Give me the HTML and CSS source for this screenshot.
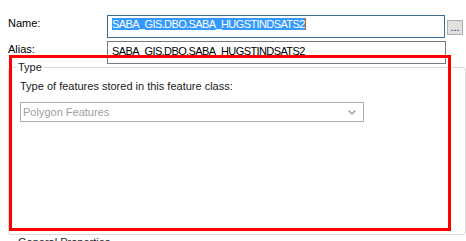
FILE: index.html
```html
<!doctype html>
<html lang="en">
  <head>
    <meta charset="UTF-8" />
    <meta name="viewport" content="width=device-width, initial-scale=1.0" />
    <title>Feature Class Properties</title>
    <link rel="stylesheet" href="styles.css">
  </head>
  <body>
    <div class="dialog">
      <div class="field-row">
        <label class="field-label">Name:</label>
        <div class="textbox textbox-focused">
          <span class="selected">SABA_GIS.DBO.SABA_HUGSTINDSATS2</span>
        </div>
        <button class="browse-button">...</button>
      </div>

      <div class="field-row">
        <label class="field-label">Alias:</label>
        <div class="textbox textbox-alias">SABA_GIS.DBO.SABA_HUGSTINDSATS2</div>
      </div>

      <fieldset class="group group-type">
        <legend>Type</legend>
        <div class="group-body">
          <p class="group-text">Type of features stored in this feature class:</p>
          <div class="combo combo-disabled">
            <span>Polygon Features</span>
            <svg class="combo-arrow" viewBox="0 0 8 5" width="8" height="5">
              <path d="M0.6 0.6 L4 4 L7.4 0.6" fill="none" stroke="currentColor" stroke-width="1.4" />
            </svg>
          </div>
        </div>
      </fieldset>

      <fieldset class="group">
        <legend>General Properties</legend>
        <div class="group-body"></div>
      </fieldset>

      <!-- annotation drawn over the Type group -->
      <div class="highlight-frame"></div>
    </div>
  </body>
</html>
```

FILE: styles.css
```css
* {
  margin: 0;
  padding: 0;
  box-sizing: border-box;
}

html,
body {
  overflow: hidden;
}

body {
  font-family: 'Liberation Sans', Arial, sans-serif;
  font-size: 11px;
  line-height: 13px;
  color: #000;
  background: #fff;
}

.dialog {
  position: relative;
  padding: 15px 0 0 8px;
}

.field-row {
  display: flex;
  align-items: flex-start;
  margin-bottom: 3px;
}

.field-label {
  width: 99px;
  padding-top: 2px;
}

.textbox {
  width: 338px;
  height: 23px;
  padding: 2px 4px 0;
  border: 1px solid #7a7a7a;
  background: #fff;
  letter-spacing: -0.6px;
  white-space: nowrap;
}

.textbox-focused {
  border-color: #3c6b90;
}

.textbox-alias {
  width: 339px;
  padding-top: 3px;
}

.selected {
  background: #3399ff;
  color: #fff;
  border-right: 1px solid #cc6600;
}

.browse-button {
  width: 16px;
  height: 15px;
  margin: 5px 0 0 2px;
  padding-top: 0;
  border: 1px solid #adadad;
  background: #e1e1e1;
  font: inherit;
  line-height: 13px;
  color: #1c1c5c;
  text-align: center;
}

.group {
  margin-top: -6px;
  padding: 0 0 0 7px;
  border: 1px solid #dcdcdc;
  border-radius: 3px;
}

.group legend {
  padding: 0 2px;
  color: #1a1a1a;
}

.group-type .group-body {
  height: 160px;
  padding: 6px 0 0 4px;
}

.group + .group {
  margin-top: 1px;
}

.group-text {
  color: #1a1a1a;
  margin-bottom: 9px;
}

.combo {
  display: flex;
  align-items: center;
  justify-content: space-between;
  width: 344px;
  height: 20px;
  padding: 0 7px 0 2px;
  border: 1px solid #adadad;
  background: #fff;
}

.combo-disabled {
  color: #a0a0a0;
}

.combo-arrow {
  display: block;
}

.highlight-frame {
  position: absolute;
  top: 55px;
  left: 9px;
  width: 442px;
  height: 176px;
  border: 3px solid #ff0000;
}
```
